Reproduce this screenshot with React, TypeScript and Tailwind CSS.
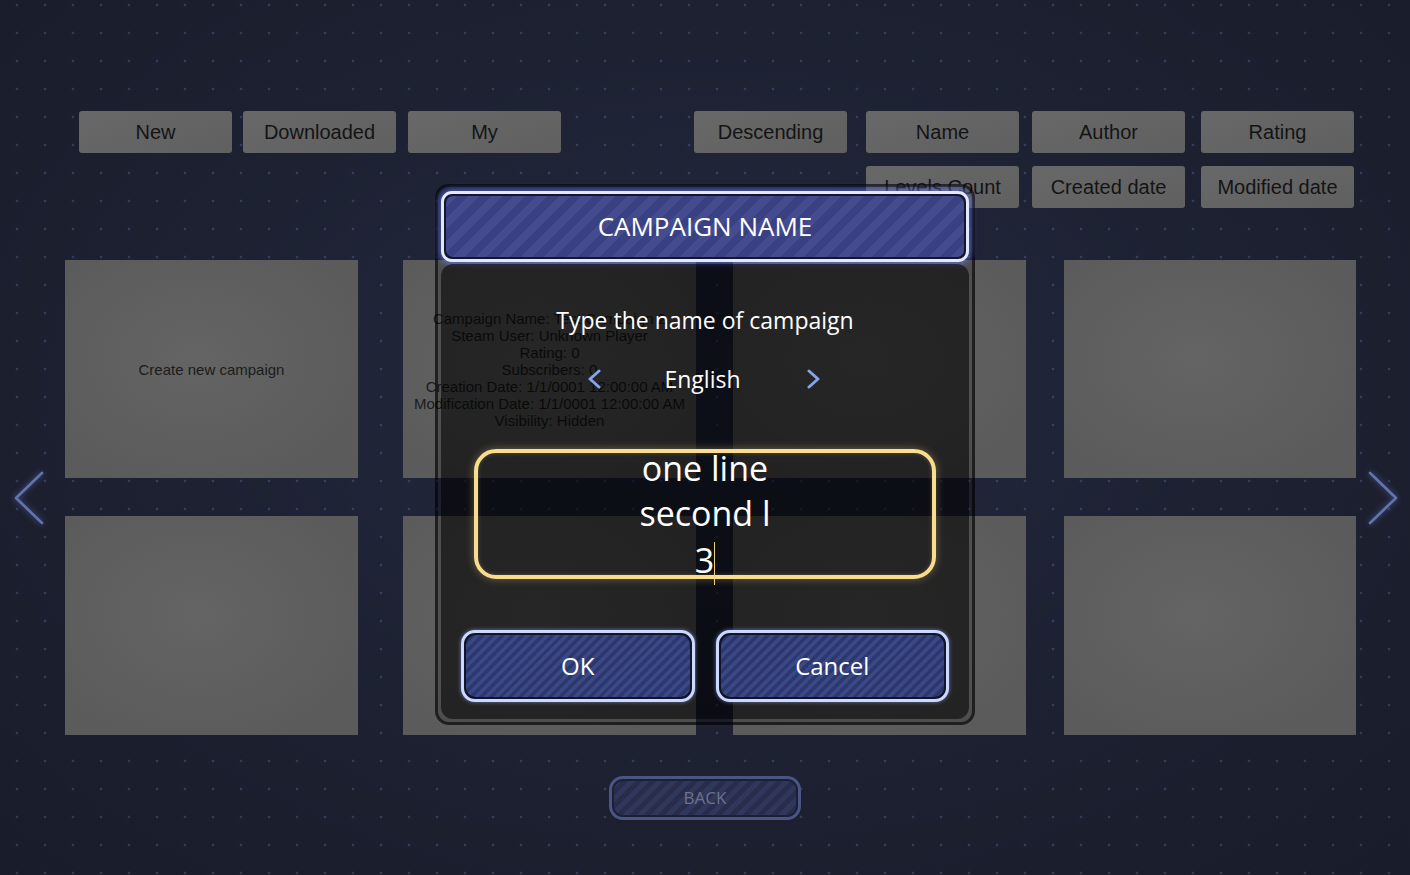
import React from "react";

function TopBtn({ children, className = "" }: { children: React.ReactNode; className?: string }) {
  return (
    <div
      className={`w-[153px] h-[42px] rounded-[3px] bg-[linear-gradient(160deg,#686868,#606060)] flex items-center justify-center text-[20px] text-[#141414] font-['Liberation_Sans',Arial,sans-serif] ${className}`}
    >
      {children}
    </div>
  );
}

function Card({ children, className = "", w = "w-[293px]" }: { children?: React.ReactNode; className?: string; w?: string }) {
  return (
    <div
      className={`${w} h-full bg-[radial-gradient(ellipse_at_45%_45%,#646464,#5b5b5b_80%)] flex flex-col items-center justify-center text-center text-[15px] leading-[17px] text-[#1b1b1b] font-['Liberation_Sans',Arial,sans-serif] whitespace-nowrap ${className}`}
    >
      {children}
    </div>
  );
}

function Chevron({ dir }: { dir: "left" | "right" }) {
  return (
    <svg width="30" height="54" viewBox="0 0 30 54" className="drop-shadow-[0_0_3px_rgba(110,130,220,0.6)]">
      <path
        d={dir === "left" ? "M28 2 L2 27 L28 52" : "M2 2 L28 27 L2 52"}
        fill="none"
        stroke="#6373ad"
        strokeWidth="2.6"
        strokeLinecap="round"
        strokeLinejoin="round"
      />
    </svg>
  );
}

function SmallChevron({ dir }: { dir: "left" | "right" }) {
  return (
    <svg width="14" height="20" viewBox="0 0 14 20">
      <path
        d={dir === "left" ? "M12 2 L3 10 L12 18" : "M2 2 L11 10 L2 18"}
        fill="none"
        stroke="#87a3ee"
        strokeWidth="3"
        strokeLinecap="round"
        strokeLinejoin="round"
      />
    </svg>
  );
}

function ModalBtn({ children }: { children: React.ReactNode }) {
  return (
    <div className="w-[234px] h-[72px] rounded-[14px] border-[3px] border-[#cbd8ff] bg-[#12152a] p-[2px] shadow-[0_0_4px_rgba(150,175,255,0.6)]">
      <div className="w-full h-full rounded-[10px] [background-image:repeating-linear-gradient(135deg,#3a4986_0px,#3a4986_3.5px,#2c386d_3.5px,#2c386d_7px)] flex items-center justify-center text-white text-[24px] font-['Open_Sans','Noto_Sans',sans-serif] font-medium">
        {children}
      </div>
    </div>
  );
}

export default function App() {
  return (
    <div className="relative w-[1410px] h-[875px] overflow-hidden pt-[111px] [background-image:radial-gradient(circle,rgba(105,125,205,0.3)_1.1px,transparent_1.7px),radial-gradient(ellipse_at_50%_45%,#242940,#1c2030_60%,#191c2a)] [background-size:28px_28px,100%_100%] [background-position:3px_19px,0_0]">
      {/* Top filter / sort buttons */}
      <div className="flex items-start">
        <div className="flex ml-[79px]">
          <TopBtn>New</TopBtn>
          <TopBtn className="ml-[11px]">Downloaded</TopBtn>
          <TopBtn className="ml-[12px]">My</TopBtn>
        </div>
        <TopBtn className="ml-[133px]">Descending</TopBtn>
        <div className="ml-[19px] flex flex-col gap-[13px]">
          <div className="flex">
            <TopBtn>Name</TopBtn>
            <TopBtn className="ml-[13px]">Author</TopBtn>
            <TopBtn className="ml-[16px]">Rating</TopBtn>
          </div>
          <div className="flex">
            <TopBtn>Levels Count</TopBtn>
            <TopBtn className="ml-[13px]">Created date</TopBtn>
            <TopBtn className="ml-[16px]">Modified date</TopBtn>
          </div>
        </div>
      </div>

      {/* Campaign grid with arrows */}
      <div className="mt-[52px] flex items-center h-[475px]">
        <div className="w-[65px] flex items-center pl-[14px]">
          <Chevron dir="left" />
        </div>
        <div className="flex flex-col gap-[38px] h-full">
          <div className="flex h-[218px]">
            <Card>Create new campaign</Card>
            <Card className="ml-[45px]">
              <div>Campaign Name: Test Campaign 2</div>
              <div>Steam User: Unknown Player</div>
              <div>Rating: 0</div>
              <div>Subscribers: 0</div>
              <div>Creation Date: 1/1/0001 12:00:00 AM</div>
              <div>Modification Date: 1/1/0001 12:00:00 AM</div>
              <div>Visibility: Hidden</div>
            </Card>
            <Card className="ml-[37px]" />
            <Card className="ml-[38px]" w="w-[292px]" />
          </div>
          <div className="flex h-[219px]">
            <Card />
            <Card className="ml-[45px]" />
            <Card className="ml-[37px]" />
            <Card className="ml-[38px]" w="w-[292px]" />
          </div>
        </div>
        <div className="ml-[12px] flex items-center">
          <Chevron dir="right" />
        </div>
      </div>

      {/* Back button */}
      <div className="mt-[41px] flex justify-center">
        <div className="w-[192px] h-[44px] rounded-[14px] border-[3px] border-[#4a5583] bg-[#1c2034] p-[2px]">
          <div className="w-full h-full rounded-[9px] [background-image:repeating-linear-gradient(135deg,#30375a_0px,#30375a_5px,#282d4b_5px,#282d4b_10px)] flex items-center justify-center text-[17px] text-[#6d738f] font-['Open_Sans','Noto_Sans',sans-serif]">
            BACK
          </div>
        </div>
      </div>

      {/* Modal dialog */}
      <div className="absolute left-[435px] top-[184px] w-[540px] h-[541px] rounded-[14px] border-[3px] border-black/60 bg-black/15 px-[3px] pt-[4px] pb-[3px] flex flex-col font-['Open_Sans','Noto_Sans',sans-serif]">
        <div className="h-[71px] rounded-[11px] border-[3px] border-[#e2e8ff] bg-[#14162a] p-[2px] shadow-[0_0_6px_2px_rgba(110,130,255,0.65)]">
          <div className="w-full h-full rounded-[7px] [background-image:repeating-linear-gradient(135deg,#444c8f_0px,#444c8f_8px,#3a4182_8px,#3a4182_16px)] flex items-center justify-center text-white text-[26px] font-medium">
            CAMPAIGN NAME
          </div>
        </div>
        <div className="mt-[2px] flex-1 rounded-[12px] bg-black/55 flex flex-col items-center">
          <div className="mt-[40px] h-[32px] leading-[32px] text-[23px] text-white font-medium">
            Type the name of campaign
          </div>
          <div className="mt-[27px] h-[32px] flex items-center">
            <span className="-ml-[2px]">
              <SmallChevron dir="left" />
            </span>
            <span className="ml-[63px] mr-[66px] text-[23px] leading-[32px] text-white font-medium">English</span>
            <SmallChevron dir="right" />
          </div>
          <div className="mt-[54px] self-stretch mx-[33px] h-[130px] rounded-[22px] border-[4px] border-[#f8dd8e] shadow-[0_0_8px_rgba(255,220,140,0.35),inset_0_0_4px_rgba(255,220,140,0.25)] flex flex-col items-center justify-center">
            <div className="text-white text-[34px] leading-[45px] text-center whitespace-nowrap mt-[3px]">
              <div>one line</div>
              <div>second l</div>
              <div className="flex items-center justify-center">
                <span>3</span>
                <span className="inline-block w-px h-[43px] bg-[#ead27e] mt-[6px]" />
              </div>
            </div>
          </div>
          <div className="mt-[51px] self-stretch px-[20px] flex gap-[21px]">
            <ModalBtn>OK</ModalBtn>
            <ModalBtn>Cancel</ModalBtn>
          </div>
        </div>
      </div>
    </div>
  );
}
